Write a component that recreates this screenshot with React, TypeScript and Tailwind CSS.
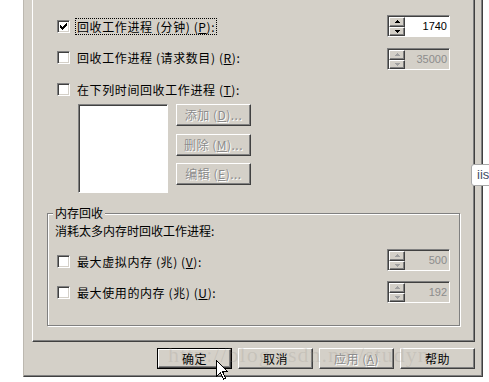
import React from "react";

const FONT = "font-['Noto_Sans_CJK_SC','Noto_Sans_CJK_JP',sans-serif]";

function Check({ checked }: { checked?: boolean }) {
  return (
    <span className="w-[13px] h-[13px] shrink-0 bg-white border border-t-[#808080] border-l-[#808080] border-r-white border-b-white shadow-[inset_1px_1px_0_#404040,inset_-1px_-1px_0_#d4d0c8] flex items-center justify-center">
      {checked && (
        <svg width="7" height="7" viewBox="0 0 7 7" shapeRendering="crispEdges">
          <polygon points="0,2 2,4 7,-1 7,2 2,7 0,5" fill="#000" />
        </svg>
      )}
    </span>
  );
}

function Arrow({ up, disabled }: { up?: boolean; disabled?: boolean }) {
  const c = disabled ? "#a0a0a0" : "#000";
  return (
    <svg width="5" height="3" viewBox="0 0 5 3" shapeRendering="crispEdges">
      {up ? <polygon points="2.5,0 5,3 0,3" fill={c} /> : <polygon points="0,0 5,0 2.5,3" fill={c} />}
    </svg>
  );
}

function SpinBtn({ up, disabled }: { up?: boolean; disabled?: boolean }) {
  return (
    <div className="h-[10px] w-[16px] bg-[#d4d0c8] border border-t-white border-l-white border-r-[#404040] border-b-[#404040] shadow-[inset_-1px_-1px_0_#808080] flex items-center justify-center">
      <Arrow up={up} disabled={disabled} />
    </div>
  );
}

function Spin({ value, disabled }: { value: string; disabled?: boolean }) {
  return (
    <div
      className={`w-[63px] h-[22px] shrink-0 flex border border-t-[#808080] border-l-[#808080] border-r-white border-b-white shadow-[inset_1px_1px_0_#404040] ${
        disabled ? "bg-[#d4d0c8]" : "bg-white"
      }`}
    >
      <div className="flex flex-col pl-[1px] pt-[1px]">
        <SpinBtn up disabled={disabled} />
        <SpinBtn disabled={disabled} />
      </div>
      <div
        className={`flex-1 flex items-center justify-end pr-[2px] font-['Liberation_Sans',sans-serif] text-[11px] ${
          disabled ? "text-[#8c8c8c]" : "text-black"
        }`}
      >
        {value}
      </div>
    </div>
  );
}

function Btn({
  children,
  disabled,
  def,
  w = "w-[75px]",
  h = "h-[22px]",
}: {
  children: React.ReactNode;
  disabled?: boolean;
  def?: boolean;
  w?: string;
  h?: string;
}) {
  const inner = (
    <div
      className={`w-full h-full flex items-center justify-center border border-t-white border-l-white border-r-[#404040] border-b-[#404040] shadow-[inset_-1px_-1px_0_#808080] text-[12px] leading-[12px] tracking-[0.5px] ${
        disabled ? "text-[#8c8c8c] [text-shadow:1px_1px_0_#fff]" : "text-black"
      }`}
    >
      {children}
    </div>
  );
  if (def) {
    return <div className={`${w} ${h} border border-black`}>{inner}</div>;
  }
  return <div className={`${w} ${h}`}>{inner}</div>;
}

function Label({ children, focus }: { children: React.ReactNode; focus?: boolean }) {
  return (
    <span
      className={`ml-[5px] text-[12px] leading-[13px] tracking-[0.6px] text-black whitespace-nowrap ${
        focus ? "border border-dotted border-black px-[1px] py-[1px]" : "border border-transparent px-[1px] py-[1px]"
      }`}
    >
      {children}
    </span>
  );
}

export default function App() {
  return (
    <div className={`w-[489px] h-[382px] bg-white relative overflow-hidden flex pl-[23px] ${FONT}`}>
      <div className="w-[460px] h-[377px] bg-[#d4d0c8] border-l border-l-[#bcb8b0] border-r border-b border-r-[#404040] border-b-[#404040] shadow-[inset_-1px_-1px_0_#808080] pl-[8px] flex flex-col">
        {/* tab page */}
        <div className="w-[443px] h-[342px] shrink-0 border-l border-l-white border-r border-b border-r-[#404040] border-b-[#404040] shadow-[inset_-1px_-1px_0_#808080] flex flex-col">
          {/* row 1 */}
          <div className="flex items-center mt-[15px] pl-[24px] h-[22px]">
            <div className="w-[330px] flex items-center">
              <Check checked />
              <Label focus>
                回收工作进程 (分钟) (<u>P</u>):
              </Label>
            </div>
            <Spin value="1740" />
          </div>
          {/* row 2 */}
          <div className="flex items-start mt-[11px] pl-[24px] h-[22px]">
            <div className="w-[330px] flex items-center mt-[1px]">
              <Check />
              <Label>
                回收工作进程 (请求数目) (<u>R</u>):
              </Label>
            </div>
            <Spin value="35000" disabled />
          </div>
          {/* row 3 */}
          <div className="flex items-center mt-[13px] pl-[24px] h-[13px]">
            <Check />
            <Label>
              在下列时间回收工作进程 (<u>T</u>):
            </Label>
          </div>
          {/* list + buttons */}
          <div className="flex items-start mt-[8px] pl-[45px]">
            <div className="w-[90px] h-[89px] bg-white border border-t-[#808080] border-l-[#808080] border-r-white border-b-white shadow-[inset_1px_1px_0_#404040]" />
            <div className="flex flex-col ml-[8px]">
              <Btn disabled>
                添加 (<u>D</u>)...
              </Btn>
              <div className="mt-[8px]">
                <Btn disabled>
                  删除 (<u>M</u>)...
                </Btn>
              </div>
              <div className="mt-[7px]">
                <Btn disabled>
                  编辑 (<u>E</u>)...
                </Btn>
              </div>
            </div>
          </div>
          {/* group box */}
          <div className="mt-[20px] ml-[14px] w-[413px] h-[113px] border border-[#808080] shadow-[inset_1px_1px_0_#fff,1px_1px_0_#fff] flex flex-col">
            <div className="-mt-[7px] ml-[5px] px-[2px] w-fit h-[12px] bg-[#d4d0c8] text-[12px] leading-[12px] text-black">
              内存回收
            </div>
            <div className="mt-[6px] ml-[7px] h-[12px] text-[12px] leading-[12px] text-black">
              消耗太多内存时回收工作进程:
            </div>
            <div className="flex items-center mt-[12px] pl-[9px] h-[22px]">
              <div className="w-[330px] flex items-center mt-[2px]">
                <Check />
                <Label>
                  最大虚拟内存 (兆) (<u>V</u>):
                </Label>
              </div>
              <Spin value="500" disabled />
            </div>
            <div className="flex items-center mt-[10px] pl-[9px] h-[22px]">
              <div className="w-[330px] flex items-center">
                <Check />
                <Label>
                  最大使用的内存 (兆) (<u>U</u>):
                </Label>
              </div>
              <Spin value="192" disabled />
            </div>
          </div>
        </div>
        {/* bottom buttons */}
        <div className="flex gap-[6px] pl-[125px] mt-[6px]">
          <Btn def h="h-[21px]">确定</Btn>
          <Btn h="h-[21px]">取消</Btn>
          <Btn disabled h="h-[21px]">
            应用 (<u>A</u>)
          </Btn>
          <Btn h="h-[21px]">帮助</Btn>
        </div>
      </div>

      {/* watermark */}
      <div className="absolute left-[168px] top-[343px] font-['Liberation_Serif',serif] text-[22px] leading-[24px] tracking-[1px] text-[rgba(150,146,140,0.22)] whitespace-nowrap pointer-events-none">
        http://blog.csdn.net/studynet
      </div>

      {/* tooltip */}
      <div className="absolute left-[471px] top-[164px] w-[34px] h-[22px] bg-white border border-[#a8a8a8] rounded-[3px] flex items-center pl-[5px] font-['Liberation_Sans',sans-serif] text-[13px] text-[#3f4d68]">
        iis<span className="inline-block w-[4px] h-[4px] bg-[#f0a020] ml-[1px] -mt-[4px]" />
      </div>

      {/* cursor */}
      <svg className="absolute left-[216px] top-[360px]" width="13" height="20" viewBox="0 0 13 20" shapeRendering="crispEdges">
        <path d="M0.5 0.5 L0.5 16.5 L4.5 12.5 L7.5 19 L9.5 18 L6.5 11.5 L11.5 11.5 Z" fill="#fff" stroke="#000" strokeWidth="1" />
      </svg>
    </div>
  );
}
